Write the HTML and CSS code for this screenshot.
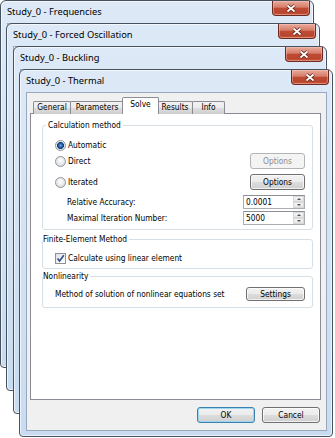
FILE: index.html
```html
<!DOCTYPE html>
<html lang="en">
<head>
  <meta charset="UTF-8" />
  <meta name="viewport" content="width=device-width, initial-scale=1.0"/>
  <title>Study_0 - Thermal</title>
  <link rel="stylesheet" href="styles.css">
</head>
<body>
  <div class="desk">
    <div class="win w1">
      <div class="titlebar">
        <span class="title">Study_0 - Frequencies</span>
        <div class="close"><svg width="12" height="9" viewBox="0 0 12 9"><path d="M2.5 1.5L9.5 7.5M9.5 1.5L2.5 7.5" stroke="#5a1d14" stroke-width="3.4"/><path d="M2.5 1.5L9.5 7.5M9.5 1.5L2.5 7.5" stroke="#fff" stroke-width="1.8"/></svg></div>
      </div>
      <div class="client"></div>
    </div>

    <div class="win w2">
      <div class="titlebar">
        <span class="title">Study_0 - Forced Oscillation</span>
        <div class="close"><svg width="12" height="9" viewBox="0 0 12 9"><path d="M2.5 1.5L9.5 7.5M9.5 1.5L2.5 7.5" stroke="#5a1d14" stroke-width="3.4"/><path d="M2.5 1.5L9.5 7.5M9.5 1.5L2.5 7.5" stroke="#fff" stroke-width="1.8"/></svg></div>
      </div>
      <div class="client"></div>
    </div>

    <div class="win w3">
      <div class="titlebar">
        <span class="title">Study_0 - Buckling</span>
        <div class="close"><svg width="12" height="9" viewBox="0 0 12 9"><path d="M2.5 1.5L9.5 7.5M9.5 1.5L2.5 7.5" stroke="#5a1d14" stroke-width="3.4"/><path d="M2.5 1.5L9.5 7.5M9.5 1.5L2.5 7.5" stroke="#fff" stroke-width="1.8"/></svg></div>
      </div>
      <div class="client"></div>
    </div>

    <div class="win w4">
      <div class="titlebar">
        <span class="title">Study_0 - Thermal</span>
        <div class="close"><svg width="12" height="9" viewBox="0 0 12 9"><path d="M2.5 1.5L9.5 7.5M9.5 1.5L2.5 7.5" stroke="#5a1d14" stroke-width="3.4"/><path d="M2.5 1.5L9.5 7.5M9.5 1.5L2.5 7.5" stroke="#fff" stroke-width="1.8"/></svg></div>
      </div>
      <div class="client dlg">
        <div class="tabs">
          <span class="tab t-general">General</span>
          <span class="tab t-params">Parameters</span>
          <span class="tab t-solve active">Solve</span>
          <span class="tab t-results">Results</span>
          <span class="tab t-info">Info</span>
        </div>

        <div class="page">
          <fieldset class="group calc">
            <legend>Calculation method</legend>
            <div class="row r1">
              <span class="radio"><span class="dot on"></span>Automatic</span>
            </div>
            <div class="row r2">
              <span class="radio"><span class="dot"></span>Direct</span>
              <button class="btn opt" disabled>Options</button>
            </div>
            <div class="row r3">
              <span class="radio"><span class="dot"></span>Iterated</span>
              <button class="btn opt">Options</button>
            </div>
            <div class="row r4">
              <span class="indent">Relative Accuracy:</span>
              <div class="spin"><span class="val">0.0001</span><span class="arrows"><i class="up"></i><i class="down"></i></span></div>
            </div>
            <div class="row r5">
              <span class="indent">Maximal Iteration Number:</span>
              <div class="spin"><span class="val">5000</span><span class="arrows"><i class="up"></i><i class="down"></i></span></div>
            </div>
          </fieldset>

          <fieldset class="group flat fem">
            <legend>Finite-Element Method</legend>
            <div class="row r-check">
              <span class="check"><span class="box"><svg width="9" height="9" viewBox="0 0 9 9"><path d="M1.5 4.5L3.6 7L7.8 1.3" fill="none" stroke="#2e4a86" stroke-width="1.6"/></svg></span>Calculate using linear element</span>
            </div>
          </fieldset>

          <fieldset class="group flat nonlin">
            <legend>Nonlinearity</legend>
            <div class="row r-nl">
              <span>Method of solution of nonlinear equations set</span>
              <button class="btn settings">Settings</button>
            </div>
          </fieldset>
        </div>

        <div class="buttons">
          <button class="btn default">OK</button>
          <button class="btn">Cancel</button>
        </div>
      </div>
    </div>
  </div>
</body>
</html>
```

FILE: styles.css
```css
* {
  box-sizing: border-box;
}
body {
  margin: 0;
  background: #ffffff;
}

.desk {
  position: relative;
  width: 335px;
  height: 438px;
  overflow: hidden;
}

/* window frames, stacked like on a desktop */
.win {
  position: absolute;
  width: 314px;
  height: 368px;
  display: flex;
  flex-direction: column;
  padding: 0 5px 5px 6px;
  border: 1px solid #47525f;
  border-radius: 6px 6px 4px 4px;
  background: linear-gradient(#dde9f7, #c8dbf0);
  box-shadow: inset 0 0 0 1px rgba(255, 255, 255, 0.65);
}
.w1 { left: 0; top: 0; }
.w2 { left: 6px; top: 23px; }
.w3 { left: 13px; top: 46px; }
.w4 { left: 19px; top: 69px; }

.titlebar {
  height: 22px;
  display: flex;
  justify-content: space-between;
  align-items: flex-start;
}
.title {
  font-family: "Noto Sans", sans-serif;
  font-size: 9.3px;
  line-height: 22px;
  color: #000;
}
.close {
  width: 38px;
  height: 15px;
  margin-right: -2px;
  display: flex;
  align-items: center;
  justify-content: center;
  border: 1px solid #6d2a20;
  border-top: none;
  border-radius: 0 0 4px 4px;
  background: linear-gradient(#e8aa9b, #d67d69 45%, #bf4b34 50%, #b8452d 85%, #cb6246);
  box-shadow: inset 0 0 0 1px rgba(255, 210, 200, 0.4);
}
.close svg {
  display: block;
}

.client {
  flex: 1;
  display: flex;
  flex-direction: column;
  background: #f0f0f0;
  border: 1px solid #98a9be;
  padding: 5px 5px 0 3px;
}

.dlg {
  font-family: "DejaVu Sans Condensed", "Liberation Sans", sans-serif;
  font-size: 8.3px;
  color: #000;
}

/* tabs */
.tabs {
  display: flex;
  align-items: flex-end;
  height: 16px;
  padding-left: 3px;
  margin-bottom: -1px;
  position: relative;
  z-index: 1;
}
.tab {
  height: 13px;
  line-height: 11px;
  text-align: center;
  border: 1px solid #898c95;
  border-bottom: none;
  border-radius: 2px 2px 0 0;
  margin-right: -1px;
  background: linear-gradient(#f2f2f2, #ebebeb 50%, #dddddd 50%, #cfcfcf);
}
.t-general { width: 38px; }
.t-params { width: 54px; }
.t-solve { width: 37px; }
.t-results { width: 36px; }
.t-info { width: 33px; }
.tab.active {
  height: 17px;
  line-height: 13px;
  margin: 0 -2px 0 -1px;
  background: #ffffff;
  position: relative;
  z-index: 2;
}

.page {
  height: 287px;
  background: #ffffff;
  border: 1px solid #898c95;
  padding: 6px 7px 0 11px;
}

.group {
  margin: 0;
  min-width: 0;
  border: 1px solid #d5dfe5;
  border-radius: 3px;
  padding: 0 7px 4px 12px;
}
.group legend {
  padding: 0 2px;
  margin-left: -9px;
  line-height: 10px;
}
.group.flat legend {
  padding: 0 2px 0 0;
  margin-left: -12px;
  background: #fff;
}

.row {
  display: flex;
  align-items: center;
  justify-content: space-between;
}
.r1 { height: 12px; margin-top: 9px; }
.r2 { height: 16px; margin-top: 2px; }
.r3 { height: 16px; margin-top: 5px; }
.r4 { height: 14px; margin-top: 5px; }
.r5 { height: 14px; margin-top: 2px; }

.fem { margin-top: 4px; padding-bottom: 4px; }
.r-check { height: 12px; margin-top: 8px; }
.nonlin { margin-top: 2px; padding-bottom: 6px; padding-left: 12px; }
.r-nl { height: 14px; margin-top: 6px; }

.radio, .check {
  display: flex;
  align-items: center;
}
.dot {
  width: 11px;
  height: 11px;
  margin-right: 2px;
  border-radius: 50%;
  border: 1px solid #8f9499;
  background: radial-gradient(circle at 50% 40%, #ffffff, #d5d8dc 90%);
}
.dot.on {
  background: radial-gradient(circle, #7fb6e8 0, #2a69b0 1.6px, #163c78 3.2px, #e2e6ea 3.8px, #fafafa 5px);
}
.indent {
  padding-left: 12px;
}

.box {
  width: 11px;
  height: 11px;
  margin-right: 2px;
  border: 1px solid #8e9196;
  background: linear-gradient(135deg, #dde1e6, #ffffff);
  display: flex;
  align-items: center;
  justify-content: center;
}
.box svg {
  display: block;
}

/* buttons */
.btn {
  height: 16px;
  padding: 0;
  font: inherit;
  color: #000;
  border: 1px solid #707070;
  border-radius: 3px;
  background: linear-gradient(#f2f2f2, #ebebeb 50%, #dddddd 50%, #cfcfcf);
  box-shadow: inset 0 0 0 1px rgba(255, 255, 255, 0.7);
}
.btn:disabled {
  color: #8a8a8a;
  border-color: #b1b5b8;
  background: #f4f4f4;
  box-shadow: none;
}
.btn.opt { width: 55px; }
.btn.settings { width: 59px; height: 14px; }
.btn.default {
  border-color: #3c7fb1;
  box-shadow: inset 0 0 0 1px #9ed6f2;
}

.spin {
  width: 62px;
  height: 14px;
  display: flex;
  border: 1px solid #abadb3;
  border-top-color: #8c8f96;
  background: #fff;
}
.spin .val {
  flex: 1;
  padding-left: 2px;
  line-height: 12px;
}
.spin .arrows {
  width: 11px;
  display: flex;
  flex-direction: column;
}
.spin i {
  flex: 1;
  display: flex;
  align-items: center;
  justify-content: center;
  background: linear-gradient(#f6f6f6, #e4e4e4);
  border: 1px solid #d8d8d8;
}
.spin i::before {
  content: "";
  border-left: 2px solid transparent;
  border-right: 2px solid transparent;
}
.spin .up::before { border-bottom: 2px solid #4d5866; }
.spin .down::before { border-top: 2px solid #4d5866; }

.buttons {
  flex: 1;
  display: flex;
  justify-content: flex-end;
  align-items: flex-start;
  gap: 7px;
  padding-top: 7px;
  padding-right: 1px;
}
.buttons .btn {
  width: 58px;
}
```
